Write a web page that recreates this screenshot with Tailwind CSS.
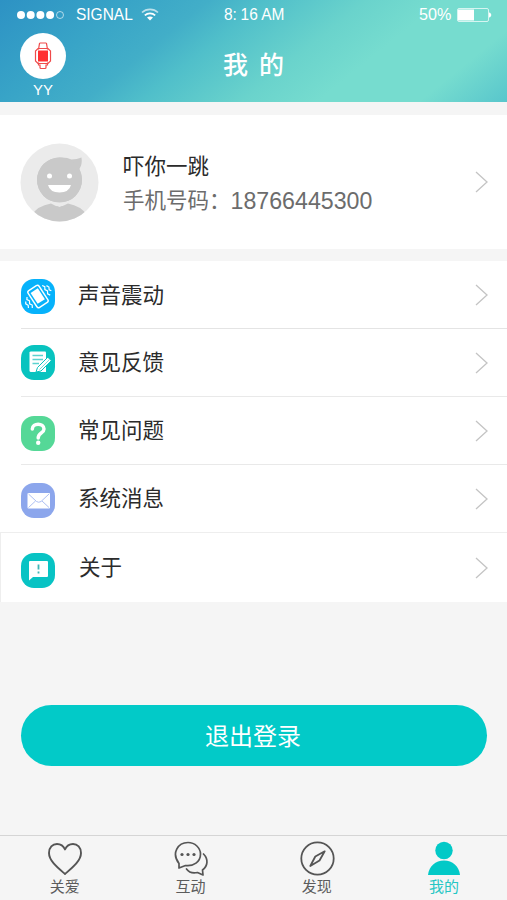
<!DOCTYPE html>
<html lang="zh-CN">
<head>
  <meta charset="UTF-8">
  <meta name="viewport" content="width=device-width, initial-scale=1.0">
  <title>我的</title>
  <script src="https://cdn.jsdelivr.net/npm/@tailwindcss/browser@4"></script>
</head>
<body class="bg-[#f5f5f5] font-['Liberation_Sans','Noto_Sans_CJK_SC',sans-serif] text-[#333]">
  <div class="flex h-[900px] w-[507px] flex-col overflow-hidden">

    <!-- Header -->
    <header class="h-[102px] shrink-0 bg-[linear-gradient(141deg,#2d92c4_0%,#38a4c7_20%,#42aec8_33%,#50bfca_42%,#6ad3cc_58%,#76dccf_70%,#76dccf_86%,#58c6cc_100%)] text-white">
      <div class="grid h-[29px] grid-cols-3 items-center text-[17px] leading-[29px]">
        <div class="flex items-center pl-[17px]">
          <svg width="48" height="10" viewBox="0 0 48 10" fill="#fff">
            <circle cx="4" cy="5" r="4"/><circle cx="13.7" cy="5" r="4"/><circle cx="23.4" cy="5" r="4"/><circle cx="33.1" cy="5" r="4"/>
            <circle cx="43" cy="5" r="3.5" fill="none" stroke="#fff" stroke-opacity=".6"/>
          </svg>
          <span class="ml-[11px] w-[57px] origin-left scale-x-[.91] whitespace-nowrap">SIGNAL</span>
          <svg class="ml-[8px]" width="18" height="13" viewBox="0 0 18 13" fill="none" stroke="#fff" stroke-width="1.7">
            <path d="M1 4.5C5.5 .3 12.5 .3 17 4.5" stroke-opacity=".65"/>
            <path d="M3.8 7.4C6.8 4.6 11.2 4.6 14.2 7.4"/>
            <path d="M9 12.6L6 9.6C7.8 8 10.2 8 12 9.6Z" fill="#fff" stroke="none"/>
          </svg>
        </div>
        <div class="flex justify-center"><span class="translate-x-[1px] scale-x-[.91] whitespace-nowrap">8:<span class="ml-[4px]">16 AM</span></span></div>
        <div class="flex items-center justify-end pr-[15px]">
          <span class="w-[34px] origin-left scale-x-[.95]">50%</span>
          <svg class="ml-[4px]" width="35" height="14" viewBox="0 0 35 14">
            <rect x=".5" y=".5" width="31" height="13" rx="1.5" fill="none" stroke="#fff" stroke-opacity=".7"/>
            <rect x="1" y="1.5" width="16" height="11" fill="#fff"/>
            <path d="M32 4.5C35 5 35 9 32 9.5Z" fill="#fff"/>
          </svg>
        </div>
      </div>
      <div class="grid grid-cols-3">
        <div class="ml-[20px] flex w-[46px] flex-col items-center pt-[4px]">
          <div class="flex size-[46px] items-center justify-center rounded-full bg-white">
            <svg width="18" height="28" viewBox="0 0 18 28" fill="none" stroke="#ef4a4a" stroke-width="1.2">
              <path d="M4.5 7.5L5.5 1.5Q5.7 1 6.3 1H11.7Q12.3 1 12.5 1.5L13.5 7.5M4.5 20.5V23H6V25.5Q6 26.5 7 26.5H11Q12 26.5 12 25.5V23H13.5V20.5"/>
              <path d="M4 6.5H14L16.5 9V19L14 21.5H4L1.5 19V9Z"/>
              <rect x="4" y="8.5" width="10" height="11" fill="#ff3032" stroke="none"/>
            </svg>
          </div>
          <span class="mt-[3px] text-[15px] leading-[16px]">YY</span>
        </div>
        <h1 class="pt-[17px] text-center text-[25px] leading-[38px] font-medium whitespace-nowrap [word-spacing:4px]">我 的</h1>
      </div>
    </header>

    <!-- Profile -->
    <section class="mt-[13px] flex h-[134px] shrink-0 items-center bg-white pr-[19px] pl-[20px]">
      <svg width="79" height="79" viewBox="0 0 79 79">
        <defs><clipPath id="face"><circle cx="39.5" cy="39.5" r="39"/></clipPath></defs>
        <circle cx="39.5" cy="39.5" r="39" fill="#ebebeb"/>
        <g clip-path="url(#face)" fill="#c9c9c9">
          <path d="M12 72Q17 63 31 60.5Q39 66 48 60.5Q61 63 67 72V80H12Z"/>
          <path d="M39.500 14.500Q47 14 51.500 16.500Q57 16.500 61.500 14.500Q62.500 21 59.500 26Q62 31 62 37A22.500 22.500 0 1 1 39.500 14.500Z"/>
        </g>
        <path d="M30.5 59H48.5L39.5 64Z" fill="#ebebeb"/>
        <circle cx="39.5" cy="37" r="22.5" fill="#c9c9c9"/>
        <circle cx="29.5" cy="33" r="2.5" fill="#fff"/><circle cx="49.5" cy="33" r="2.5" fill="#fff"/>
        <path d="M28 42H51Q49 49.5 39.5 49.5Q30 49.5 28 42Z" fill="#fff"/>
      </svg>
      <div class="ml-[24px] flex-1 pt-[3px]">
        <div class="text-[21.5px] leading-[34px] text-[#2b2b2b]">吓你一跳</div>
        <div class="flex text-[21.5px] leading-[34px] text-[#6c6c6c]"><span>手机号码：</span><span class="text-[23.2px]">18766445300</span></div>
      </div>
      <svg width="13" height="22" viewBox="0 0 13 22" fill="none" stroke="#c4c4c4" stroke-width="1.3"><path d="M1 1L12 11L1 21"/></svg>
    </section>

    <!-- Settings list -->
    <ul class="mt-[12px] shrink-0 bg-white text-[21.5px] text-[#2b2b2b]">
      <li class="flex h-[67px] pl-[21px]">
        <svg class="mt-[18px]" width="34" height="35" viewBox="0 0 34 35">
          <rect width="34" height="35" rx="13" fill="#06b2fb"/>
          <g transform="rotate(-33 17 17.5)" fill="none" stroke="#fff">
            <rect x="10.5" y="7.5" width="13" height="20" rx="2" stroke-width="1.4"/>
            <rect x="12.7" y="10.5" width="8.600" height="13" fill="#fff" stroke="none"/>
            <path d="M7.500 12L6 14L7.500 16.500L6 19L7.500 21.500L6 24M4 15L2.700 17L4 19.500L2.700 22M26.500 10.500L28 13L26.500 15.500L28 18L26.500 20.500L28 23M30 13L31.300 15.500L30 18L31.300 20" stroke-width="1.2"/>
          </g>
        </svg>
        <div class="ml-[23px] flex-1 leading-[70px]">声音震动</div>
        <svg class="mt-[23px] mr-[19px]" width="13" height="22" viewBox="0 0 13 22" fill="none" stroke="#c4c4c4" stroke-width="1.3"><path d="M1 1L12 11L1 21"/></svg>
      </li>
      <li class="ml-[21px] flex h-[68px] border-t border-[#e4e4e4]">
        <svg class="mt-[16px]" width="34" height="35" viewBox="0 0 34 35">
          <rect width="34" height="35" rx="13" fill="#08c3bf"/>
          <path d="M10 6.500H24Q25 6.500 25 7.500V27H10Q8.500 27 8.500 25.500V7.500Q8.500 6.500 10 6.500Z" fill="#fff"/>
          <path d="M11.500 10.500H22M11.500 14.500H22M11.500 18.500H18" stroke="#5bd2cf" stroke-width="1.4"/>
          <path d="M15 27L16.500 22.500L26.800 12.200L30.300 15.700L20 26Z" fill="#fff" stroke="#08c3bf" stroke-width="1"/>
          <path d="M18.500 24.500L28 15" stroke="#5bd2cf" stroke-width=".8"/>
        </svg>
        <div class="ml-[23px] flex-1 leading-[69px]">意见反馈</div>
        <svg class="mt-[23px] mr-[19px]" width="13" height="22" viewBox="0 0 13 22" fill="none" stroke="#c4c4c4" stroke-width="1.3"><path d="M1 1L12 11L1 21"/></svg>
      </li>
      <li class="ml-[21px] flex h-[68px] border-t border-[#e9e9e9]">
        <svg class="mt-[19px]" width="34" height="35" viewBox="0 0 34 35">
          <rect width="34" height="35" rx="13" fill="#55d897"/>
          <path d="M11.300 13C11.300 6.500 23 6.500 23 13C23 17 17.200 17 17.200 22" fill="none" stroke="#fff" stroke-width="3.500" stroke-linecap="round"/>
          <circle cx="17.200" cy="26.800" r="2.200" fill="#fff"/>
        </svg>
        <div class="ml-[23px] flex-1 leading-[69px]">常见问题</div>
        <svg class="mt-[23px] mr-[19px]" width="13" height="22" viewBox="0 0 13 22" fill="none" stroke="#c4c4c4" stroke-width="1.3"><path d="M1 1L12 11L1 21"/></svg>
      </li>
      <li class="ml-[21px] flex h-[68px] border-t border-[#e9e9e9]">
        <svg class="mt-[18px]" width="34" height="35" viewBox="0 0 34 35">
          <rect width="34" height="35" rx="13" fill="#8ca6ec"/>
          <rect x="6.500" y="10" width="22.500" height="15.500" rx="1" fill="#fff"/>
          <path d="M7.500 11L15.500 18.500Q17.700 20 20 18.500L28 11M7.500 24.500L14.500 18M28 24.500L21 18" fill="none" stroke="#a4b8f0" stroke-width=".9"/>
        </svg>
        <div class="ml-[23px] flex-1 leading-[69px]">系统消息</div>
        <svg class="mt-[23px] mr-[19px]" width="13" height="22" viewBox="0 0 13 22" fill="none" stroke="#c4c4c4" stroke-width="1.3"><path d="M1 1L12 11L1 21"/></svg>
      </li>
      <li class="flex h-[70px] border-t border-l border-[#eeeeee] pl-[20px]">
        <svg class="mt-[20px]" width="34" height="35" viewBox="0 0 34 35">
          <rect width="34" height="35" rx="13" fill="#08c3c4"/>
          <path d="M9 8H26Q27 8 27 9V23Q27 24 26 24H12L8 27.500V9Q8 8 9 8Z" fill="#fff"/>
          <path d="M17.500 11.500V16.500M17.500 18.500V20.500" stroke="#3fb5b6" stroke-width="1.8"/>
        </svg>
        <div class="ml-[24px] flex-1 leading-[71px]">关于</div>
        <svg class="mt-[24px] mr-[19px]" width="13" height="22" viewBox="0 0 13 22" fill="none" stroke="#c4c4c4" stroke-width="1.3"><path d="M1 1L12 11L1 21"/></svg>
      </li>
    </ul>

    <button class="mt-[103px] mr-[20px] ml-[21px] h-[61px] shrink-0 rounded-full bg-[#02cac8] pt-[2px] pr-[2px] text-[24px] text-white">退出登录</button>

    <!-- Tab bar -->
    <nav class="mt-auto grid h-[65px] shrink-0 grid-cols-4 border-t border-[#d5d5d5] text-[15px] text-[#5c5c5c]">
      <a class="flex flex-col items-center pt-[5px] pl-[3px]">
        <svg width="36" height="36" viewBox="0 0 36 36" fill="none" stroke="#555" stroke-width="1.9" stroke-linejoin="round">
          <path d="M18 33C11 27 2 20 2 12C2 6.500 5.500 3 10 3C13.500 3 16.500 5 18 8.500C19.500 5 22.500 3 26 3C30.500 3 34 6.500 34 12C34 20 25 27 18 33Z"/>
        </svg>
        <span class="leading-[19px]">关爱</span>
      </a>
      <a class="flex flex-col items-center pt-[5px] pl-[1px]">
        <svg width="36" height="36" viewBox="0 0 36 36" fill="none" stroke="#555" stroke-width="1.7" stroke-linejoin="round" stroke-linecap="round">
          <path d="M6 27V22.500C-2 12 5 1.500 15 1.500C22 1.500 27.500 7 27.500 13C27.500 21 20.500 25.500 12.500 24.500Z"/>
          <path d="M30.500 13C35.500 18 35 25 29.500 29L30 34L24.500 31.500C20 32.500 16 31.500 13.500 28"/>
          <g fill="#555" stroke="none"><circle cx="9" cy="13.500" r="1.600"/><circle cx="15" cy="13.500" r="1.600"/><circle cx="21" cy="13.500" r="1.600"/></g>
        </svg>
        <span class="leading-[19px]">互动</span>
      </a>
      <a class="flex flex-col items-center pt-[5px]">
        <svg width="36" height="36" viewBox="0 0 36 36" fill="none" stroke="#555" stroke-width="1.8" stroke-linejoin="round">
          <circle cx="18.500" cy="17.500" r="16.200"/>
          <path d="M25.700 10.300L16.300 15.500L11.300 25L20.500 19.500Z"/>
        </svg>
        <span class="leading-[19px]">发现</span>
      </a>
      <a class="flex flex-col items-center pt-[5px] pl-[1px] text-[#25c6c4]">
        <svg width="36" height="36" viewBox="0 0 36 36" fill="#02c9c7">
          <circle cx="18" cy="9.500" r="8.700"/>
          <path d="M2 34C3 25 9.500 19.500 18 19.500S33 25 34 34Z"/>
        </svg>
        <span class="leading-[19px]">我的</span>
      </a>
    </nav>
  </div>
</body>
</html>
